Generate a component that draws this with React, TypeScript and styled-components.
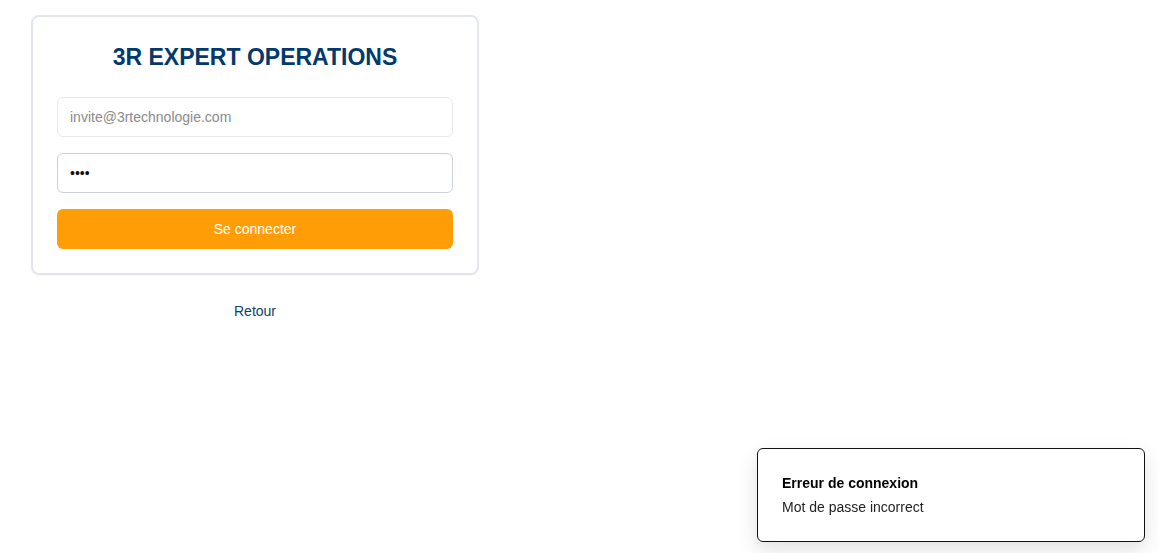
import React from "react";
import styled, { createGlobalStyle } from "styled-components";

const GlobalStyle = createGlobalStyle`
  * { box-sizing: border-box; }
  html, body { margin: 0; padding: 0; background: #ffffff; }
  body { font-family: "Liberation Sans", Arial, sans-serif; }
`;

const Page = styled.main`
  padding: 15px 0 0 31px;
  min-height: 553px;
`;

const Column = styled.div`
  width: 448px;
  display: flex;
  flex-direction: column;
  align-items: stretch;
`;

const Card = styled.form`
  border: 2px solid #e3e7ec;
  border-radius: 8px;
  padding: 26px 24px 24px;
  display: flex;
  flex-direction: column;
  box-shadow: 0 1px 2px rgba(0, 0, 0, 0.04);
`;

const Title = styled.h1`
  margin: 0 0 26px;
  text-align: center;
  font-size: 23px;
  font-weight: 700;
  color: #033a6b;
  line-height: 28px;
`;

const Field = styled.input<{ $strong?: boolean }>`
  height: 40px;
  width: 100%;
  border: 1px solid ${(p) => (p.$strong ? "#c9d3de" : "#e6e9ed")};
  border-radius: 6px;
  padding: 0 12px;
  font-family: "Liberation Sans", Arial, sans-serif;
  font-size: 14px;
  color: #111;
  background: #fff;
  margin-bottom: 16px;
  outline: none;
  &::placeholder { color: #8a8a8a; }
`;

const Submit = styled.button`
  height: 40px;
  border: none;
  border-radius: 6px;
  background: #ff9d07;
  color: #ffffff;
  font-family: "Liberation Sans", Arial, sans-serif;
  font-size: 14px;
  cursor: pointer;
`;

const BackLink = styled.a`
  align-self: center;
  margin-top: 28px;
  color: #0c4467;
  font-size: 14px;
  line-height: 16px;
  text-decoration: none;
`;

const Toast = styled.div`
  position: fixed;
  right: 13px;
  bottom: 11px;
  width: 388px;
  height: 94px;
  border: 1px solid #111;
  border-radius: 6px;
  background: #fff;
  padding: 24px 24px;
  box-shadow: 0 8px 20px rgba(0, 0, 0, 0.12);
  display: flex;
  flex-direction: column;
  gap: 4px;
`;

const ToastTitle = styled.div`
  font-size: 14px;
  font-weight: 700;
  color: #000;
  line-height: 20px;
`;

const ToastText = styled.div`
  font-size: 14px;
  color: #222;
  line-height: 20px;
`;

export default function App() {
  return (
    <>
      <GlobalStyle />
      <Page>
        <Column>
          <Card onSubmit={(e) => e.preventDefault()}>
            <Title>3R EXPERT OPERATIONS</Title>
            <Field type="email" placeholder="invite@3rtechnologie.com" />
            <Field type="password" defaultValue="test" $strong />
            <Submit type="submit">Se connecter</Submit>
          </Card>
          <BackLink href="#">Retour</BackLink>
        </Column>
      </Page>
      <Toast>
        <ToastTitle>Erreur de connexion</ToastTitle>
        <ToastText>Mot de passe incorrect</ToastText>
      </Toast>
    </>
  );
}
